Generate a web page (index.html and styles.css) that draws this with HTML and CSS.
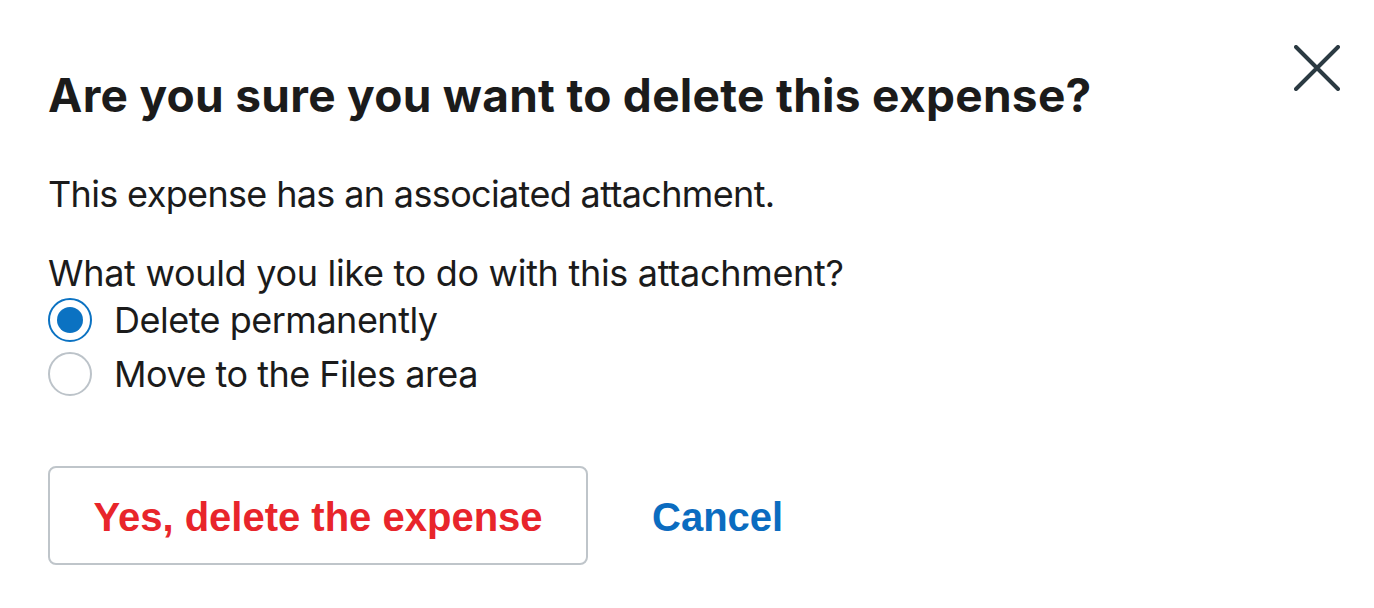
FILE: index.html
```html
<!DOCTYPE html>
<html lang="en">
<head>
  <meta charset="UTF-8">
  <meta name="viewport" content="width=device-width, initial-scale=1.0">
  <title>Delete expense</title>
  <link rel="stylesheet" href="styles.css">
</head>
<body>
  <!-- Confirm dialog -->
  <div class="dialog">
    <div class="dialog-header">
      <h1>Are you sure you want to delete this expense?</h1>
      <button class="dialog-close" aria-label="Close">
        <svg width="46" height="46" viewBox="0 0 46 46">
          <path d="M2 2 L44 44 M44 2 L2 44" stroke="#2b3a42" stroke-width="4" stroke-linecap="round" fill="none"/>
        </svg>
      </button>
    </div>

    <p class="dialog-text">This expense has an associated attachment.</p>

    <div class="dialog-options">
      <p class="dialog-question">What would you like to do with this attachment?</p>
      <label class="radio">
        <input type="radio" name="attachment" value="delete" checked>
        <span class="radio-mark"></span>
        <span>Delete permanently</span>
      </label>
      <label class="radio">
        <input type="radio" name="attachment" value="move">
        <span class="radio-mark"></span>
        <span>Move to the Files area</span>
      </label>
    </div>

    <div class="dialog-actions">
      <button class="btn-delete">Yes, delete the expense</button>
      <a href="#" class="btn-cancel">Cancel</a>
    </div>
  </div>
</body>
</html>
```

FILE: styles.css
```css
body {
  font-family: Inter, "Noto Sans", sans-serif;
  background-color: #fff;
  color: #1b1b1b;
  margin: 0;
  padding: 0;
}
.dialog {
  padding: 0 34px 0 48px;
}

/* Header */
.dialog-header {
  display: flex;
  justify-content: space-between;
  align-items: flex-start;
}
.dialog-header h1 {
  font-size: 46px;
  font-weight: 700;
  line-height: 56px;
  letter-spacing: 0.3px;
  margin: 67px 0 0;
  color: #1b1b1b;
}
.dialog-close {
  background: none;
  border: none;
  padding: 0;
  margin-top: 45px;
  cursor: pointer;
  line-height: 0;
}

/* Body */
.dialog-text {
  font-size: 36px;
  line-height: 52px;
  letter-spacing: -0.65px;
  margin: 45px 0 0;
}
.dialog-options {
  margin-top: 31px;
  letter-spacing: -0.5px;
}
.dialog-question {
  font-size: 36px;
  line-height: 44px;
  letter-spacing: -0.3px;
  margin: 0 0 -2px;
}
.radio {
  display: flex;
  align-items: center;
  gap: 22px;
  font-size: 36px;
  line-height: 54px;
  cursor: pointer;
}
.radio input {
  display: none;
}
.radio-mark {
  width: 44px;
  height: 44px;
  box-sizing: border-box;
  border: 2px solid #bcc3c9;
  border-radius: 50%;
  display: flex;
  align-items: center;
  justify-content: center;
}
.radio input:checked + .radio-mark {
  border-color: #0b72c2;
}
.radio input:checked + .radio-mark::after {
  content: "";
  width: 26px;
  height: 26px;
  border-radius: 50%;
  background-color: #0b72c2;
}

/* Actions */
.dialog-actions {
  display: flex;
  align-items: center;
  gap: 64px;
  margin-top: 65px;
}
.btn-delete {
  width: 540px;
  height: 99px;
  padding-top: 4px;
  background-color: #fff;
  border: 2px solid #bfc5ca;
  border-radius: 8px;
  color: #e8252b;
  font-family: "Liberation Sans", Arial, sans-serif;
  font-size: 40px;
  font-weight: 700;
  cursor: pointer;
}
.btn-cancel {
  color: #0b6cc0;
  font-family: "Liberation Sans", Arial, sans-serif;
  font-size: 40px;
  font-weight: 700;
  text-decoration: none;
  padding-top: 4px;
}
```
